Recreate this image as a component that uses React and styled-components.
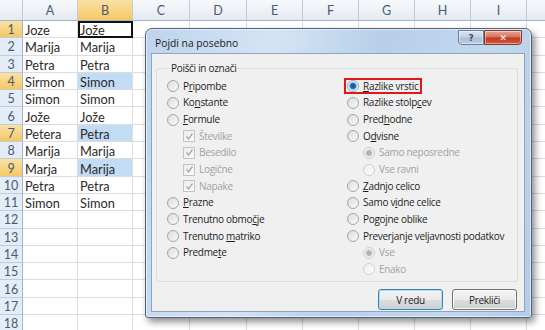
import React from "react"
import styled, { createGlobalStyle } from "styled-components"

const GlobalStyle = createGlobalStyle`
  html, body {
    margin: 0;
    padding: 0;
    background: #ffffff;
    overflow: hidden;
  }
`

const colWidths = [23, 55, 55, 57, 57, 56, 56, 56, 56, 56, 40]
const colNames = ["", "A", "B", "C", "D", "E", "F", "G", "H", "I", ""]

const rows = [
  ["Joze", "Jože"],
  ["Marija", "Marija"],
  ["Petra", "Petra"],
  ["Sirmon", "Simon", true],
  ["Simon", "Simon"],
  ["Jože", "Jože"],
  ["Petera", "Petra", true],
  ["Marija", "Marija"],
  ["Marja", "Marija", true],
  ["Petra", "Petra"],
  ["Simon", "Simon"],
]

const Page = styled.div`
  position: relative;
  width: 545px;
  height: 330px;
  overflow: hidden;
  font-family: Lato, "Liberation Sans", sans-serif;
`

const Sheet = styled.div`
  display: grid;
  grid-template-columns: ${colWidths.map(w => w + "px").join(" ")};
  grid-template-rows: 21px repeat(18, 17.3px);
`

const ColHead = styled.div`
  display: flex;
  align-items: center;
  justify-content: center;
  font-size: 12.5px;
  color: #4a5a74;
  border-right: 1px solid #c5cbd3;
  border-bottom: 1px solid #9eb6ce;
  background: ${p =>
    p.$active
      ? "linear-gradient(#f9e1a5, #f6c866)"
      : "linear-gradient(#f7f9fc, #e5eaf1)"};
  box-sizing: border-box;
`

const RowHead = styled.div`
  display: flex;
  align-items: center;
  justify-content: center;
  padding-top: 1px;
  font-size: 12.5px;
  color: #4a5a74;
  border-right: 1px solid #9eb6ce;
  border-bottom: 1px solid #c5cbd3;
  background: ${p => (p.$active ? "linear-gradient(#f9e1a5, #f6c866)" : "#e4ecf7")};
  box-sizing: border-box;
`

const Cell = styled.div`
  display: flex;
  align-items: center;
  padding: 2px 0 0 2px;
  font-size: 12.8px;
  color: #2a2a2a;
  border-right: 1px solid #dadcdd;
  border-bottom: 1px solid #dadcdd;
  background: ${p => (p.$hl ? "#c2dcf5" : "#ffffff")};
  box-sizing: border-box;
  outline: ${p => (p.$selected ? "2px solid #111" : "none")};
  outline-offset: -2px;
  white-space: nowrap;
`

const Window = styled.div`
  position: absolute;
  left: 145px;
  top: 28px;
  width: 387px;
  height: 290px;
  box-sizing: border-box;
  border: 1px solid #51627a;
  border-radius: 7px 7px 3px 3px;
  background: linear-gradient(100deg, #bed4ec 0%, #d4e4f4 30%, #b7cfe9 55%, #c3d8ee 80%, #b3cce7 100%);
  box-shadow: 3px 4px 7px rgba(0, 0, 0, 0.45), inset 0 0 0 1px rgba(255, 255, 255, 0.55);
  display: flex;
  flex-direction: column;
  padding: 0 6px 5px 5px;
  font-family: "Open Sans", "Noto Sans", sans-serif;
  font-size: 10px;
  letter-spacing: -0.3px;
  color: #1e1e1e;
`

const TitleBar = styled.div`
  height: 24px;
  display: flex;
  align-items: flex-start;
  justify-content: space-between;
`

const Title = styled.div`
  padding: 7px 0 0 4px;
  font-size: 10.3px;
  letter-spacing: 0;
  color: #1b1b1b;
`

const Caption = styled.div`
  display: flex;
  margin-top: 1px;
  margin-right: 3px;
`

const CaptionButton = styled.div`
  height: 15px;
  width: ${p => (p.$close ? "38px" : "26px")};
  display: flex;
  align-items: center;
  justify-content: center;
  box-sizing: border-box;
  border: 1px solid ${p => (p.$close ? "#7e3a2e" : "#6d7f96")};
  border-radius: ${p => (p.$close ? "0 0 4px 0" : "0 0 0 4px")};
  background: ${p =>
    p.$close
      ? "linear-gradient(#e8a79a, #d5705b 45%, #c4391f 55%, #d4583c)"
      : "linear-gradient(#dae5f1, #c3d3e5 45%, #acc0d8 55%, #bccde2)"};
  font-family: "DejaVu Sans", sans-serif;
  font-size: 9px;
  font-weight: bold;
  color: ${p => (p.$close ? "#ffffff" : "#3a4d66")};
  box-shadow: inset 0 0 0 1px rgba(255, 255, 255, 0.45);
`

const Panel = styled.div`
  flex: 1;
  background: #f0f0f0;
  border: 1px solid #8ea5bf;
  display: flex;
  flex-direction: column;
  padding: 7px 6px 0 4px;
`

const Group = styled.fieldset`
  margin: 0;
  padding: 3px 0 4px 10px;
  border: 1px solid #d5dfe5;
  border-radius: 3px;
  height: 221px;
  box-sizing: border-box;
  display: grid;
  grid-template-columns: 180px 1fr;
  align-content: start;
`

const Legend = styled.legend`
  padding: 0 1px;
  margin-left: 3px;
  font-size: 10px;
`

const Column = styled.div`
  display: flex;
  flex-direction: column;
`

const Option = styled.div`
  height: 16.65px;
  display: flex;
  align-items: center;
  gap: 4px;
  padding-left: ${p => (p.$indent ? "16px" : "0")};
  color: ${p => (p.$disabled ? "#a2a2a2" : "#1e1e1e")};
  white-space: nowrap;
`

const Marked = styled.span`
  display: flex;
  align-items: center;
  gap: 4px;
  height: 16px;
  box-sizing: border-box;
  margin-left: -3px;
  padding: 0 2px 0 1px;
  border: 2px solid #e0161b;
`

const Label = styled.span`
  line-height: 13px;
`

const Radio = styled.span`
  width: 12px;
  height: 12px;
  border-radius: 50%;
  box-sizing: border-box;
  flex: none;
  border: 1px solid ${p => (p.$disabled ? "#cfcfcf" : "#a3a5a7")};
  background: ${p =>
    p.$checked
      ? p.$disabled
        ? "radial-gradient(circle, #b4b4b4 0 2.5px, #dcdcdc 3px, #f4f4f4 5px)"
        : "radial-gradient(circle, #1d5d9a 0 2px, #3f93cf 3px, #cbe3f2 4px, #f4f8fb 5px)"
      : p.$disabled
      ? "linear-gradient(135deg, #efefef, #fbfbfb)"
      : "linear-gradient(135deg, #dcdcdc, #fafafa)"};
`

const Box = styled.span`
  width: 12px;
  height: 12px;
  box-sizing: border-box;
  flex: none;
  border: 1px solid #c4c4c4;
  background: linear-gradient(135deg, #ececec, #fbfbfb);
  display: flex;
  align-items: center;
  justify-content: center;
`

const Buttons = styled.div`
  display: flex;
  justify-content: flex-end;
  gap: 9px;
  padding: 7px 1px 0 0;
`

const Button = styled.div`
  width: 65px;
  height: 21px;
  box-sizing: border-box;
  display: flex;
  align-items: center;
  justify-content: center;
  border: 1px solid ${p => (p.$default ? "#3c7fb1" : "#707070")};
  border-radius: 3px;
  background: linear-gradient(#f2f2f2, #ebebeb 50%, #dddddd 51%, #cfcfcf);
  box-shadow: inset 0 0 0 1px ${p => (p.$default ? "#a7e0f7" : "#fbfbfb")};
  font-size: 10px;
  color: #1e1e1e;
`

const RadioRow = ({ children, checked, disabled, indent, marked }) => {
  const inner = (
    <>
      <Radio $checked={checked} $disabled={disabled} />
      <Label>{children}</Label>
    </>
  )
  return (
    <Option $disabled={disabled} $indent={indent}>
      {marked ? <Marked>{inner}</Marked> : inner}
    </Option>
  )
}

const CheckRow = ({ children }) => (
  <Option $disabled $indent>
    <Box>
      <svg width="9" height="9" viewBox="0 0 9 9">
        <polyline points="1.5,4.5 3.5,7 7.5,1.5" fill="none" stroke="#a8a8a8" strokeWidth="1.3" />
      </svg>
    </Box>
    <Label>{children}</Label>
  </Option>
)

const App = () => {
  const bodyRows = []
  for (let r = 0; r < 18; r++) {
    const data = rows[r]
    const hl = data && data[2]
    bodyRows.push(<RowHead key={"h" + r} $active={hl || r === 0}>{r + 1}</RowHead>)
    for (let c = 1; c < colWidths.length; c++) {
      let text = ""
      if (data && c === 1) text = data[0]
      if (data && c === 2) text = data[1]
      bodyRows.push(
        <Cell key={r + "-" + c} $hl={hl && c === 2} $selected={r === 0 && c === 2}>
          {text}
        </Cell>
      )
    }
  }

  return (
    <Page>
      <GlobalStyle />
      <Sheet>
        {colNames.map((name, i) => (
          <ColHead key={i} $active={name === "B"}>{name}</ColHead>
        ))}
        {bodyRows}
      </Sheet>

      <Window>
        <TitleBar>
          <Title>Pojdi na posebno</Title>
          <Caption>
            <CaptionButton>?</CaptionButton>
            <CaptionButton $close>✕</CaptionButton>
          </Caption>
        </TitleBar>
        <Panel>
          <Group>
            <Legend>Poišči in označi</Legend>
            <Column>
              <RadioRow>P<u>r</u>ipombe</RadioRow>
              <RadioRow>Ko<u>n</u>stante</RadioRow>
              <RadioRow><u>F</u>ormule</RadioRow>
              <CheckRow>Številke</CheckRow>
              <CheckRow>Besedilo</CheckRow>
              <CheckRow>Logične</CheckRow>
              <CheckRow>Napake</CheckRow>
              <RadioRow><u>P</u>razne</RadioRow>
              <RadioRow>Trenutno obmo<u>č</u>je</RadioRow>
              <RadioRow>Trenutno <u>m</u>atriko</RadioRow>
              <RadioRow>Predme<u>t</u>e</RadioRow>
            </Column>
            <Column>
              <RadioRow checked marked><u>R</u>azlike vrstic</RadioRow>
              <RadioRow>Razlike stolp<u>c</u>ev</RadioRow>
              <RadioRow>Pred<u>h</u>odne</RadioRow>
              <RadioRow>O<u>d</u>visne</RadioRow>
              <RadioRow checked disabled indent>Samo neposredne</RadioRow>
              <RadioRow disabled indent>Vse ravni</RadioRow>
              <RadioRow><u>Z</u>adnjo celico</RadioRow>
              <RadioRow>Samo v<u>i</u>dne celice</RadioRow>
              <RadioRow>Pogojne oblike</RadioRow>
              <RadioRow>Preverjanje veljavnosti podatkov</RadioRow>
              <RadioRow checked disabled indent>Vse</RadioRow>
              <RadioRow disabled indent>Enako</RadioRow>
            </Column>
          </Group>
          <Buttons>
            <Button $default>V redu</Button>
            <Button>Prekliči</Button>
          </Buttons>
        </Panel>
      </Window>
    </Page>
  )
}

export default App
